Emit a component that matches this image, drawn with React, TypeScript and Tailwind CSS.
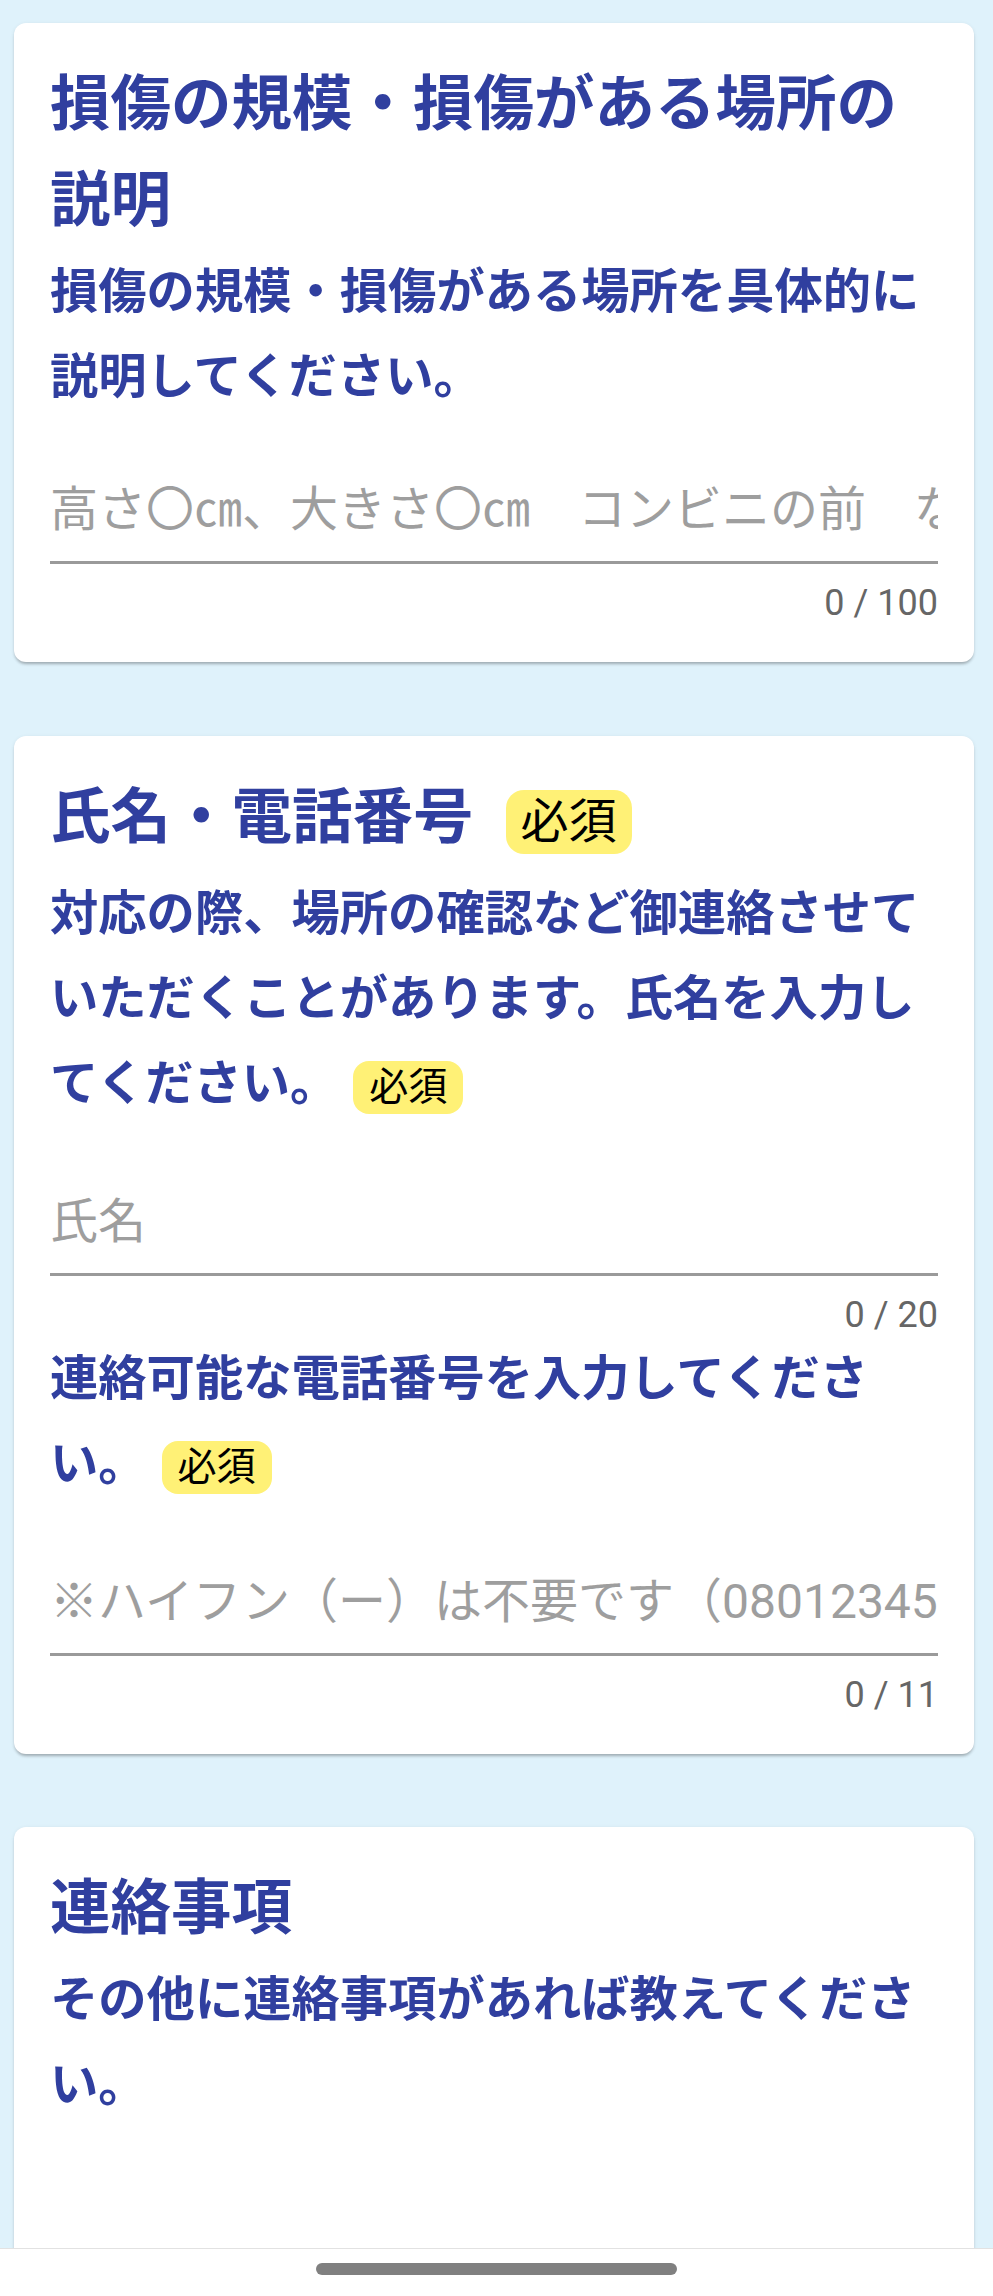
import React from "react";

const titleCls = "text-[60.5px] leading-[96px] font-bold text-[#303f9f]";
const subCls = "text-[48.3px] leading-[85px] font-bold text-[#303f9f]";

function BigBadge() {
  return (
    <span className="ml-[32px] inline-block h-[64px] rounded-[18px] bg-[#fff176] px-[15px] align-middle text-[48px] font-normal leading-[64px] text-black">
      必須
    </span>
  );
}

function SmallBadge() {
  return (
    <span className="ml-[15px] inline-block h-[53px] rounded-[16px] bg-[#fff176] px-[16px] align-middle text-[39px] font-normal leading-[53px] text-black">
      必須
    </span>
  );
}

function Field({ placeholder, count, gap }: { placeholder: string; count: string; gap: string }) {
  return (
    <div className={gap}>
      <div className="border-b-[3px] border-[#9a9a9a] pb-[22px]">
        <input
          readOnly
          placeholder={placeholder}
          className="block h-[58px] w-full bg-transparent p-0 text-[48px] leading-[58px] text-[#212121] outline-none placeholder:text-[#9e9e9e]"
        />
      </div>
      <div className="mt-[18px] text-right text-[36px] leading-[42px] text-[#666666]">{count}</div>
    </div>
  );
}

function Card({ children, className = "" }: { children: React.ReactNode; className?: string }) {
  return (
    <section
      className={
        "ml-[14px] w-[960px] rounded-[12px] bg-white px-[36px] pt-[34px] pb-[38px] shadow-[0_3px_3px_-1px_rgba(0,0,0,0.25),0_1px_4px_rgba(0,0,0,0.08)] " +
        className
      }
    >
      {children}
    </section>
  );
}

export default function App() {
  return (
    <div className="flex h-[2296px] flex-col overflow-hidden bg-[#dff2fb] font-['Roboto','Noto_Sans_CJK_JP',sans-serif]">
      <main className="min-h-0 flex-1 overflow-hidden pt-[23px]">
        <Card>
          <h2 className={titleCls}>損傷の規模・損傷がある場所の説明</h2>
          <p className={subCls}>損傷の規模・損傷がある場所を具体的に説明してください。</p>
          <Field gap="mt-[62px]" placeholder="高さ〇㎝、大きさ〇㎝　コンビニの前　など" count="0 / 100" />
        </Card>

        <Card className="mt-[74px]">
          <h2 className={titleCls + " pb-[5px]"}>
            氏名・電話番号
            <BigBadge />
          </h2>
          <p className={subCls}>
            対応の際、場所の確認など御連絡させていただくことがあります。氏名を入力してください。
            <SmallBadge />
          </p>
          <Field gap="mt-[67px]" placeholder="氏名" count="0 / 20" />
          <p className={subCls}>
            連絡可能な電話番号を入力してください。
            <SmallBadge />
          </p>
          <Field gap="mt-[67px]" placeholder="※ハイフン（ー）は不要です（08012345678）" count="0 / 11" />
        </Card>

        <Card className="mt-[73px]">
          <h2 className={titleCls}>連絡事項</h2>
          <p className={subCls}>その他に連絡事項があれば教えてください。</p>
          <div className="h-[400px]" />
        </Card>
      </main>
      <footer className="flex h-[48px] shrink-0 items-start justify-center border-t border-[#e2e2e2] bg-white pt-[14px]">
        <div className="h-[12px] w-[361px] rounded-full bg-[#808080]" />
      </footer>
    </div>
  );
}
